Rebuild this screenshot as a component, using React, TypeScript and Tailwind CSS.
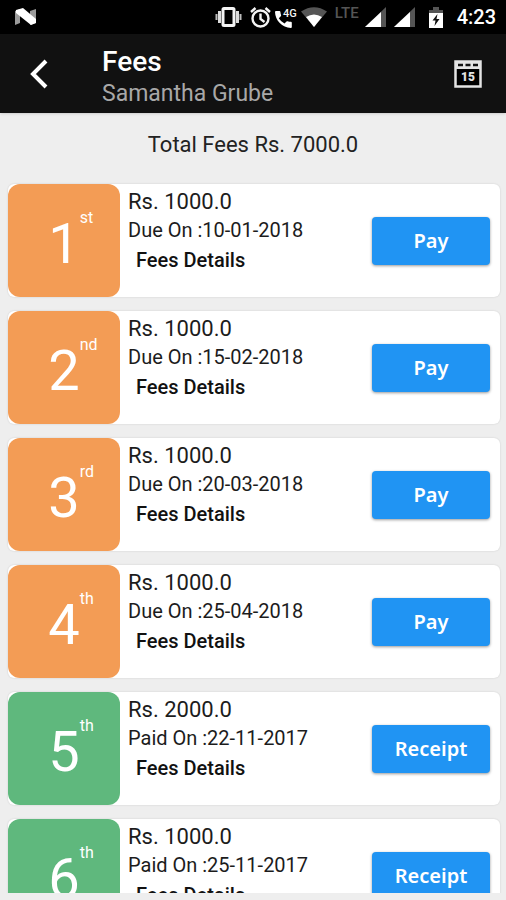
import { JSX } from "react";
import { clsx } from "clsx";

interface Installment {
  number: number;
  suffix: string;
  amount: string;
  date: string;
  paid: boolean;
}

const installments: Installment[] = [
  { number: 1, suffix: "st", amount: "1000.0", date: "10-01-2018", paid: false },
  { number: 2, suffix: "nd", amount: "1000.0", date: "15-02-2018", paid: false },
  { number: 3, suffix: "rd", amount: "1000.0", date: "20-03-2018", paid: false },
  { number: 4, suffix: "th", amount: "1000.0", date: "25-04-2018", paid: false },
  { number: 5, suffix: "th", amount: "2000.0", date: "22-11-2017", paid: true },
  { number: 6, suffix: "th", amount: "1000.0", date: "25-11-2017", paid: true },
];

function NougatIcon(): JSX.Element {
  return (
    <svg width="22" height="18" viewBox="0 0 22 18" aria-hidden="true">
      <path d="M0 3 5 1v14l-5 2ZM15 3l6-2v14l-6 2Z" fill="#9b9b9b" />
      <path d="M1 2 8 0l13 11v4l-5 2L1 5Z" fill="#fff" />
    </svg>
  );
}

function VibrateIcon(): JSX.Element {
  return (
    <svg width="27" height="20" viewBox="0 0 27 20" aria-hidden="true">
      <path d="M1.5 7v6M25.5 7v6" stroke="#bbb" strokeWidth="2" />
      <path d="M4.5 4v12M22.5 4v12" stroke="#ddd" strokeWidth="3" />
      <rect x="8" y="1.5" width="11" height="17" rx="1" fill="none" stroke="#f4f4f4" strokeWidth="3" />
    </svg>
  );
}

function AlarmIcon(): JSX.Element {
  return (
    <svg width="21" height="21" viewBox="0 0 21 21" fill="none" stroke="#f4f4f4" strokeWidth="2.4" aria-hidden="true">
      <circle cx="10.5" cy="11.5" r="8" />
      <path d="M10.5 6.5v5.5l4 3M1 5l4.5-4M20 5l-4.5-4" />
    </svg>
  );
}

function CallIcon(): JSX.Element {
  return (
    <svg width="22" height="21" viewBox="0 0 22 21" aria-hidden="true">
      <path
        d="M1 4h3.500q.8 0 .9.9.2 1.900.7 3.200.2.6-.3 1.100L3.800 11.200a14 14 0 0 0 5.700 5.300l2-2q.5-.5 1.100-.3 1.500.5 3.300.6.9.1.9.9V20q0 .9-.9.9C7.200 20.600.2 13.500 0 5q0-1 1-1Z"
        fill="#fff"
      />
      <text x="8" y="10" fill="#f4f4f4" fontSize="11" fontWeight="500" fontFamily="Roboto, sans-serif">
        4G
      </text>
    </svg>
  );
}

function WifiIcon(): JSX.Element {
  return (
    <svg width="26" height="20" viewBox="0 0 26 20" aria-hidden="true">
      <path d="M0 4.500Q13-4 26 4.500L13 20Z" fill="#555" />
      <path d="M5 10q8-5 16 0L13 20Z" fill="#fff" />
    </svg>
  );
}

function SignalIcon(): JSX.Element {
  return (
    <svg width="21" height="20" viewBox="0 0 21 20" aria-hidden="true">
      <path d="M0 20 21 0v20Z" fill="#555" />
      <path d="M0 20 16 5v15Z" fill="#fff" />
    </svg>
  );
}

function BatteryIcon(): JSX.Element {
  return (
    <svg width="14" height="21" viewBox="0 0 14 21" aria-hidden="true">
      <path d="M0 3h4V0h6v3h4v4H0Z" fill="#555" />
      <path d="M0 6h14v15H0Z" fill="#fff" />
      <path d="m8.500 7-5 6.500h3L5.500 19l5-7h-3Z" fill="#111" />
    </svg>
  );
}

function BackIcon(): JSX.Element {
  return (
    <svg width="18" height="30" viewBox="0 0 18 30" fill="none" aria-hidden="true">
      <path d="M16 2 3 15l13 13" stroke="#fff" strokeWidth="4" />
    </svg>
  );
}

function CalendarIcon(): JSX.Element {
  return (
    <svg width="28" height="28" viewBox="0 0 28 28" aria-hidden="true">
      <rect x="1.5" y="1.5" width="25" height="25" fill="#000" stroke="#e4e4e4" strokeWidth="2.5" />
      <path d="M2 2h24v7H2Z" fill="#e4e4e4" />
      <path d="M4 5h5M11.500 5h5M19 5h5" stroke="#111" strokeWidth="2.5" />
      <text
        x="14"
        y="20.5"
        fill="#e4e4e4"
        textAnchor="middle"
        fontSize="12"
        fontWeight="900"
        fontFamily="Roboto, sans-serif"
      >
        15
      </text>
    </svg>
  );
}

function StatusBar(): JSX.Element {
  return (
    <div className="flex h-[34px] shrink-0 items-center justify-between bg-black pr-2.5 pl-[15px] text-white">
      <NougatIcon />
      <div className="flex items-center">
        <VibrateIcon />
        <span className="ml-2"><AlarmIcon /></span>
        <span className="ml-1"><CallIcon /></span>
        <span className="ml-1"><WifiIcon /></span>
        <span className="ml-2 self-start text-[15px] leading-4 font-medium text-[#555]">LTE</span>
        <span className="ml-1.5"><SignalIcon /></span>
        <span className="ml-2"><SignalIcon /></span>
        <span className="ml-3.5"><BatteryIcon /></span>
        <span className="ml-3.5 text-xl leading-6 font-medium">4:23</span>
      </div>
    </div>
  );
}

function Header(): JSX.Element {
  return (
    <header className="flex h-[79px] shrink-0 items-center bg-[#111] pr-6 pl-[30px] shadow-sm">
      <button type="button" aria-label="Back">
        <BackIcon />
      </button>
      <div className="ml-[54px] flex-1 pt-2">
        <h1 className="text-[28px] leading-8 font-medium text-white">Fees</h1>
        <p className="text-[23px] leading-8 text-[#a8a8a8]">Samantha Grube</p>
      </div>
      <button type="button" aria-label="Calendar">
        <CalendarIcon />
      </button>
    </header>
  );
}

function InstallmentCard({ number, suffix, amount, date, paid }: Installment): JSX.Element {
  return (
    <li className="flex h-[113px] shrink-0 rounded-md bg-white shadow-[0_0_2px_rgba(0,0,0,0.15)]">
      <div
        className={clsx(
          "flex w-28 shrink-0 items-center justify-center rounded-xl pt-1.5 text-white",
          paid ? "bg-[#5fb87d]" : "bg-[#f39c55]"
        )}
      >
        <span className="relative text-[56px] leading-[68px]">
          {number}
          <sup className="absolute top-0 left-full text-base leading-4">{suffix}</sup>
        </span>
      </div>
      <div className="flex flex-1 flex-col items-start pt-0.5 pl-2 text-[#1c1c1c]">
        <p className="text-[22px] leading-8">Rs. {amount}</p>
        <p className="text-xl leading-6">
          {paid ? "Paid" : "Due"} On :{date}
        </p>
        <button type="button" className="px-2 text-xl leading-9 font-medium text-[#111]">
          Fees Details
        </button>
      </div>
      <button
        type="button"
        className="mr-2.5 h-12 w-[118px] self-center rounded-sm bg-[#2094f3] font-['Noto_Sans',sans-serif] text-xl font-semibold text-white shadow-[0_1px_3px_rgba(0,0,0,0.4)]"
      >
        {paid ? "Receipt" : "Pay"}
      </button>
    </li>
  );
}

export default function App(): JSX.Element {
  return (
    <div className="flex h-screen flex-col bg-[#eee] pb-[7px] font-[Roboto,sans-serif]">
      <StatusBar />
      <Header />
      <p className="pt-4 pb-3 text-center text-[22px] leading-8 text-[#222]">Total Fees Rs. 7000.0</p>
      <ul className="flex min-h-0 flex-1 flex-col gap-3.5 overflow-hidden px-2 pt-[11px] pr-1.5">
        {installments.map((item) => (
          <InstallmentCard key={item.number} {...item} />
        ))}
      </ul>
    </div>
  );
}
